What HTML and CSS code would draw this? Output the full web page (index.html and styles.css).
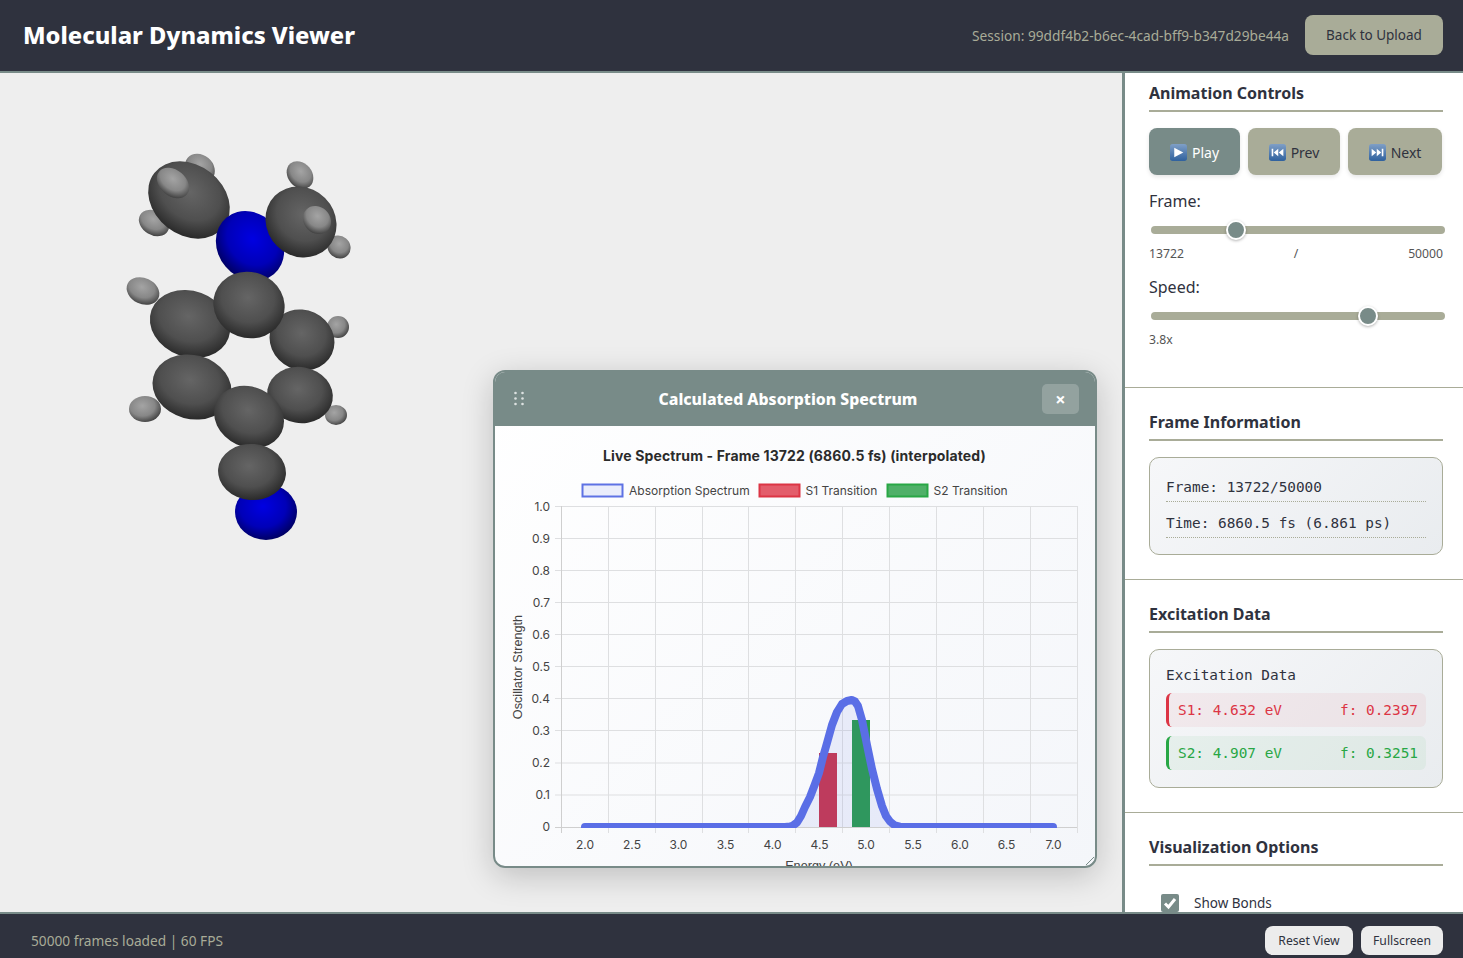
FILE: index.html
```html
<!DOCTYPE html>
<html>
  <head>
    <title>Molecular Dynamics Viewer</title>
    <link rel="stylesheet" href="styles.css">
  </head>
  <body>
    <header class="topbar">
      <h1>Molecular Dynamics Viewer</h1>
      <div class="session">
        <span class="session-id">Session: 99ddf4b2-b6ec-4cad-bff9-b347d29be44a</span>
        <button class="btn-upload">Back to Upload</button>
      </div>
    </header>

    <div class="main">
      <div class="viewer">
        <svg class="molecule" viewBox="0 73 1122 839">
          <defs>
            <radialGradient id="carbon" cx="0.45" cy="0.4" r="0.62">
              <stop offset="0" stop-color="#656565" />
              <stop offset="0.6" stop-color="#4f4f4f" />
              <stop offset="1" stop-color="#282828" />
            </radialGradient>
            <radialGradient id="hydrogen" cx="0.42" cy="0.38" r="0.65">
              <stop offset="0" stop-color="#a4a4a4" />
              <stop offset="0.6" stop-color="#878787" />
              <stop offset="1" stop-color="#404040" />
            </radialGradient>
            <radialGradient id="nitrogen" cx="0.45" cy="0.4" r="0.62">
              <stop offset="0" stop-color="#0000e2" />
              <stop offset="0.6" stop-color="#0000b8" />
              <stop offset="1" stop-color="#00005e" />
            </radialGradient>
            <linearGradient id="keyBlue" x1="0" y1="0" x2="0" y2="1">
              <stop offset="0" stop-color="#7f9fc6" />
              <stop offset="1" stop-color="#2f619e" />
            </linearGradient>
          </defs>
          <ellipse fill="url(#hydrogen)" cx="200" cy="168" rx="16" ry="13" transform="rotate(40 200 168)" />
          <ellipse fill="url(#hydrogen)" cx="154" cy="223" rx="16" ry="12" transform="rotate(30 154 223)" />
          <ellipse fill="url(#hydrogen)" cx="300" cy="175" rx="15" ry="12" transform="rotate(50 300 175)" />
          <ellipse fill="url(#hydrogen)" cx="339" cy="247" rx="12" ry="11" transform="rotate(40 339 247)" />
          <ellipse fill="url(#carbon)" cx="189" cy="200" rx="44" ry="35" transform="rotate(38 189 200)" />
          <ellipse fill="url(#hydrogen)" cx="173" cy="183" rx="18" ry="13" transform="rotate(40 173 183)" />
          <ellipse fill="url(#nitrogen)" cx="250" cy="246" rx="37" ry="32" transform="rotate(50 250 246)" />
          <ellipse fill="url(#carbon)" cx="301" cy="222" rx="37" ry="34" transform="rotate(45 301 222)" />
          <ellipse fill="url(#hydrogen)" cx="317" cy="220" rx="15" ry="13" transform="rotate(45 317 220)" />
          <ellipse fill="url(#hydrogen)" cx="143" cy="291" rx="17" ry="13" transform="rotate(25 143 291)" />
          <ellipse fill="url(#hydrogen)" cx="338" cy="327" rx="11" ry="11" />
          <ellipse fill="url(#carbon)" cx="302" cy="340" rx="33" ry="30" transform="rotate(25 302 340)" />
          <ellipse fill="url(#carbon)" cx="190" cy="324" rx="41" ry="33" transform="rotate(20 190 324)" />
          <ellipse fill="url(#carbon)" cx="249" cy="305" rx="36" ry="33" transform="rotate(20 249 305)" />
          <ellipse fill="url(#hydrogen)" cx="145" cy="409" rx="16" ry="13" />
          <ellipse fill="url(#hydrogen)" cx="336" cy="415" rx="11" ry="10" />
          <ellipse fill="url(#carbon)" cx="300" cy="395" rx="33" ry="28" transform="rotate(10 300 395)" />
          <ellipse fill="url(#carbon)" cx="192" cy="387" rx="40" ry="32" transform="rotate(15 192 387)" />
          <ellipse fill="url(#carbon)" cx="249" cy="417" rx="36" ry="30" transform="rotate(25 249 417)" />
          <ellipse fill="url(#nitrogen)" cx="266" cy="512" rx="31" ry="28" />
          <ellipse fill="url(#carbon)" cx="252" cy="472" rx="34" ry="28" transform="rotate(5 252 472)" />
        </svg>

        <div class="spectrum-modal">
          <div class="modal-head">
            <svg class="grip" width="12" height="16" viewBox="0 0 12 16">
              <circle cx="1.5" cy="2" r="1.3" />
              <circle cx="8.5" cy="2" r="1.3" />
              <circle cx="1.5" cy="7.5" r="1.3" />
              <circle cx="8.5" cy="7.5" r="1.3" />
              <circle cx="1.5" cy="13" r="1.3" />
              <circle cx="8.5" cy="13" r="1.3" />
            </svg>
            <h3>Calculated Absorption Spectrum</h3>
            <button class="modal-close">&times;</button>
          </div>
          <div class="modal-body">
            <svg class="chart" width="600" height="440" viewBox="495 426 600 440">
              <defs>
                <clipPath id="plotArea"><rect x="561" y="506" width="516" height="322" /></clipPath>
              </defs>
              <text class="chart-title" x="794.5" y="461" text-anchor="middle">Live Spectrum - Frame 13722 (6860.5 fs) (interpolated)</text>

              <rect x="582.5" y="484.5" width="40" height="12" fill="#eaedfb" stroke="#5e72e4" stroke-width="2" />
              <text class="tick" x="629" y="495">Absorption Spectrum</text>
              <rect x="759.5" y="484.5" width="40" height="12" fill="#e35d6b" stroke="#dc3545" stroke-width="2" />
              <text class="tick" x="805.5" y="495">S1 Transition</text>
              <rect x="887.5" y="484.5" width="40" height="12" fill="#4fb068" stroke="#28a745" stroke-width="2" />
              <text class="tick" x="933.5" y="495">S2 Transition</text>

              <path class="grid" d="M608.5 506V833M655.5 506V833M702.5 506V833M748.5 506V833M795.5 506V833M842.5 506V833M889.5 506V833M936.5 506V833M983.5 506V833M1030.5 506V833M1077.5 506V833" />
              <path class="grid" d="M555 506.5H1077M555 538.5H1077M555 570.5H1077M555 602.5H1077M555 634.5H1077M555 666.5H1077M555 698.5H1077M555 730.5H1077M555 763H1077M555 795H1077" />
              <path class="axis" d="M561.5 506V833M555 827.5H1077" />

              <rect x="819" y="753" width="18" height="74" fill="#c9354f" />
              <rect x="852" y="720" width="18" height="107" fill="#2a9b50" />
              <g clip-path="url(#plotArea)">
                <polygon class="curve-fill" points="785,827 790,826.5 793,825.5 797,822.5 801,816 805,807 810,797 815,784 819,773 823,757 827,743 832,725 837,712 842,704 847,701 851.7,700 855,701.5 858,706 862,720 867,745 872,769 877,789 882,806 886,816 890,821.5 895,825.5 900,826.7 905,827" />
                <polyline class="curve" points="585,827 785,827 790,826.5 793,825.5 797,822.5 801,816 805,807 810,797 815,784 819,773 823,757 827,743 832,725 837,712 842,704 847,701 851.7,700 855,701.5 858,706 862,720 867,745 872,769 877,789 882,806 886,816 890,821.5 895,825.5 900,826.7 905,827 1053,827" />
              </g>

              <text class="tick" x="550" y="511" text-anchor="end">1.0</text>
              <text class="tick" x="550" y="543" text-anchor="end">0.9</text>
              <text class="tick" x="550" y="575" text-anchor="end">0.8</text>
              <text class="tick" x="550" y="607" text-anchor="end">0.7</text>
              <text class="tick" x="550" y="639" text-anchor="end">0.6</text>
              <text class="tick" x="550" y="671" text-anchor="end">0.5</text>
              <text class="tick" x="550" y="703" text-anchor="end">0.4</text>
              <text class="tick" x="550" y="735" text-anchor="end">0.3</text>
              <text class="tick" x="550" y="767" text-anchor="end">0.2</text>
              <text class="tick" x="550" y="799" text-anchor="end">0.1</text>
              <text class="tick" x="550" y="831" text-anchor="end">0</text>

              <text class="tick" x="585" y="849" text-anchor="middle">2.0</text>
              <text class="tick" x="632" y="849" text-anchor="middle">2.5</text>
              <text class="tick" x="678.5" y="849" text-anchor="middle">3.0</text>
              <text class="tick" x="725.5" y="849" text-anchor="middle">3.5</text>
              <text class="tick" x="772.5" y="849" text-anchor="middle">4.0</text>
              <text class="tick" x="819.5" y="849" text-anchor="middle">4.5</text>
              <text class="tick" x="866" y="849" text-anchor="middle">5.0</text>
              <text class="tick" x="913" y="849" text-anchor="middle">5.5</text>
              <text class="tick" x="960" y="849" text-anchor="middle">6.0</text>
              <text class="tick" x="1006.5" y="849" text-anchor="middle">6.5</text>
              <text class="tick" x="1053.5" y="849" text-anchor="middle">7.0</text>

              <text class="axis-title" x="819" y="870" text-anchor="middle">Energy (eV)</text>
              <text class="axis-title" transform="translate(522 667) rotate(-90)" text-anchor="middle">Oscillator Strength</text>
            </svg>
          </div>
          <svg class="resize-grip" width="10" height="10" viewBox="0 0 10 10">
            <path d="M1 9L9 1M5 9L9 5" />
          </svg>
        </div>
      </div>

      <aside class="sidebar">
        <section class="panel panel-first">
          <h3>Animation Controls</h3>
          <div class="controls">
            <button class="ctrl ctrl-play">
              <svg class="key" viewBox="0 0 16 16"><rect width="16" height="16" rx="2.5" fill="url(#keyBlue)" /><path d="M4 3.5L12.5 8L4 12.5Z" /></svg>
              Play
            </button>
            <button class="ctrl ctrl-prev">
              <svg class="key" viewBox="0 0 16 16"><rect width="16" height="16" rx="2.5" fill="url(#keyBlue)" /><path d="M2.5 4.5H4V11.5H2.5ZM8.7 4.5V11.5L4.5 8ZM13.5 4.5V11.5L9.2 8Z" /></svg>
              Prev
            </button>
            <button class="ctrl ctrl-next">
              <svg class="key" viewBox="0 0 16 16"><rect width="16" height="16" rx="2.5" fill="url(#keyBlue)" /><path d="M2.5 4.5L6.8 8L2.5 11.5ZM7.3 4.5L11.5 8L7.3 11.5ZM12 4.5H13.5V11.5H12Z" /></svg>
              Next
            </button>
          </div>
          <label class="field-label">Frame:</label>
          <input class="slider" type="range" min="0" max="50000" value="13722">
          <div class="slider-values"><span>13722</span><span>/</span><span>50000</span></div>
          <label class="field-label">Speed:</label>
          <input class="slider" type="range" min="0.1" max="5" step="0.1" value="3.8">
          <div class="slider-values"><span>3.8x</span></div>
        </section>

        <section class="panel">
          <h3>Frame Information</h3>
          <div class="info-box">
            <div class="info-row">Frame: 13722/50000</div>
            <div class="info-row">Time: 6860.5 fs (6.861 ps)</div>
          </div>
        </section>

        <section class="panel">
          <h3>Excitation Data</h3>
          <div class="info-box exc-box">
            <div class="exc-title">Excitation Data</div>
            <div class="exc-row exc-s1"><span>S1: 4.632 eV</span><span>f: 0.2397</span></div>
            <div class="exc-row exc-s2"><span>S2: 4.907 eV</span><span>f: 0.3251</span></div>
          </div>
        </section>

        <section class="panel">
          <h3>Visualization Options</h3>
          <label class="option">
            <span class="check"><svg width="18" height="18" viewBox="0 0 18 18"><path d="M4 9.5L7.5 13L14 5" /></svg></span>
            Show Bonds
          </label>
        </section>
      </aside>
    </div>

    <footer class="bottombar">
      <span class="status">50000 frames loaded | 60 FPS</span>
      <div class="footer-btns">
        <button class="btn-foot btn-reset">Reset View</button>
        <button class="btn-foot btn-full">Fullscreen</button>
      </div>
    </footer>
  </body>
</html>
```

FILE: styles.css
```css
body {
  margin: 0;
  height: 100vh;
  display: flex;
  flex-direction: column;
  overflow: hidden;
  font-family: "Noto Sans", sans-serif;
  color: #2f323e;
  background-color: #eeeeee;
}

button {
  font-family: "Noto Sans", sans-serif;
  border: none;
}

.topbar {
  height: 70px;
  flex-shrink: 0;
  display: flex;
  align-items: center;
  justify-content: space-between;
  padding: 0 20px 1px 23px;
  background-color: #2f323e;
  border-bottom: 2px solid #788b88;
}

.topbar h1 {
  margin: 0;
  font-size: 23.7px;
  font-weight: 800;
  color: white;
}

.session {
  display: flex;
  align-items: center;
  gap: 16px;
}

.session-id {
  font-size: 13.7px;
  color: #a9ac98;
}

.btn-upload {
  width: 138px;
  height: 40px;
  font-size: 13.5px;
  color: #2f323e;
  background-color: #a9ac98;
  border-radius: 8px;
}

.main {
  flex: 1;
  min-height: 0;
  display: flex;
}

.viewer {
  flex: 1;
  position: relative;
  overflow: hidden;
}

.molecule {
  display: block;
  width: 100%;
  height: 100%;
}

.spectrum-modal {
  position: absolute;
  left: 493px;
  top: 297px;
  width: 600px;
  height: 494px;
  border: 2px solid #788b88;
  border-radius: 12px;
  overflow: hidden;
  background: linear-gradient(135deg, #ffffff, #f4f6fa);
  box-shadow: 0 8px 32px rgba(0, 0, 0, 0.2);
}

.modal-head {
  height: 54px;
  display: flex;
  align-items: center;
  justify-content: center;
  padding-right: 14px;
  position: relative;
  background-color: #788b88;
}

.modal-head h3 {
  margin: 0;
  font-size: 15.8px;
  font-weight: 800;
  color: white;
}

.grip {
  position: absolute;
  left: 19px;
  top: 19px;
  fill: rgba(255, 255, 255, 0.75);
}

.modal-close {
  position: absolute;
  left: 547px;
  top: 12px;
  width: 37px;
  height: 30px;
  padding: 0;
  font-size: 18px;
  font-weight: 700;
  color: white;
  background-color: rgba(255, 255, 255, 0.2);
  border-radius: 5px;
}

.chart {
  display: block;
}

.chart-title {
  font-family: Inter, sans-serif;
  font-size: 14px;
  font-weight: 700;
  letter-spacing: 0.13px;
  fill: #2b2b2b;
}

.tick {
  font-family: Inter, sans-serif;
  font-size: 12px;
  fill: #444444;
}

.axis-title {
  font-family: "Liberation Sans", sans-serif;
  font-size: 12.7px;
  fill: #444444;
}

.grid {
  fill: none;
  stroke: #dedfe1;
  stroke-width: 1;
}

.axis {
  fill: none;
  stroke: #cfcfcf;
  stroke-width: 1;
}

.curve {
  fill: none;
  stroke: #5a6ee6;
  stroke-width: 8;
  stroke-linejoin: round;
  stroke-linecap: round;
}

.curve-fill {
  fill: rgba(94, 114, 228, 0.1);
}

.resize-grip {
  position: absolute;
  right: 0;
  bottom: 0;
  fill: none;
  stroke: #788b88;
  stroke-width: 1;
}

.sidebar {
  width: 338px;
  flex-shrink: 0;
  overflow: hidden;
  background-color: white;
  border-left: 3px solid #788b88;
}

.panel {
  padding: 23px 20px 24px 24px;
  border-bottom: 1px solid #a9ac98;
}

.panel-first {
  padding-top: 9px;
}

.panel h3 {
  margin: 0 0 16px 0;
  padding-bottom: 6px;
  font-size: 16px;
  font-weight: 700;
  line-height: 22px;
  border-bottom: 2px solid #a9ac98;
}

.controls {
  display: flex;
  gap: 8px;
  margin-bottom: 16px;
}

.ctrl {
  height: 47px;
  display: flex;
  align-items: center;
  justify-content: center;
  gap: 5px;
  padding: 2px 0 0 0;
  font-size: 14px;
  color: #2f323e;
  background-color: #a9ac98;
  border-radius: 8px;
  box-shadow: 0 2px 4px rgba(0, 0, 0, 0.1);
}

.ctrl-play {
  width: 91px;
  color: white;
  background-color: #788b88;
}

.ctrl-prev {
  width: 92px;
}

.ctrl-next {
  width: 94px;
}

.key {
  width: 17px;
  height: 17px;
  fill: white;
}

.field-label {
  display: block;
  font-size: 16px;
  line-height: 20px;
}

.slider {
  appearance: none;
  display: block;
  width: 294px;
  height: 8px;
  margin: 15px 0 0 2px;
  background-color: #a9ac98;
  border-radius: 4px;
}

.slider::-webkit-slider-thumb {
  appearance: none;
  width: 20px;
  height: 20px;
  background-color: #788b88;
  border: 2px solid white;
  border-radius: 50%;
  box-shadow: 0 1px 3px rgba(0, 0, 0, 0.3);
}

.slider-values {
  display: flex;
  justify-content: space-between;
  margin: 11px 0 15px 0;
  font-size: 12.2px;
  line-height: 17px;
  color: #555555;
}

.info-box {
  padding: 16px;
  border: 1px solid #a9ac98;
  border-radius: 10px;
  background: linear-gradient(135deg, #f6f7f9, #e9ecef);
  font-family: "DejaVu Sans Mono", monospace;
  font-size: 14.4px;
}

.exc-box {
  padding-bottom: 17px;
}

.info-row {
  height: 27px;
  line-height: 26px;
  margin-bottom: 8px;
  border-bottom: 1px dotted #a9ac98;
}

.info-row:last-child {
  margin-bottom: 0;
}

.exc-title {
  line-height: 18px;
  margin-bottom: 8px;
}

.exc-row {
  height: 34px;
  display: flex;
  align-items: center;
  justify-content: space-between;
  padding: 0 8px 0 9px;
  margin-top: 9px;
  border-left: 3px solid;
  border-radius: 6px;
}

.exc-s1 {
  color: #dc3545;
  border-color: #dc3545;
  background-color: rgba(220, 53, 69, 0.06);
}

.exc-s2 {
  color: #28a745;
  border-color: #28a745;
  background-color: rgba(40, 167, 69, 0.06);
}

.option {
  display: flex;
  align-items: center;
  gap: 15px;
  margin: 28px 0 0 12px;
  font-size: 13.5px;
}

.check {
  width: 18px;
  height: 18px;
  background-color: #788b88;
  border-radius: 2px;
}

.check svg {
  display: block;
  fill: none;
  stroke: white;
  stroke-width: 3;
}

.bottombar {
  height: 31px;
  flex-shrink: 0;
  display: flex;
  align-items: center;
  justify-content: space-between;
  padding: 11px 20px 2px 31px;
  background-color: #2f323e;
  border-top: 2px solid #788b88;
}

.status {
  font-size: 13.7px;
  color: #a9ac98;
}

.footer-btns {
  display: flex;
  gap: 8px;
}

.btn-foot {
  height: 29px;
  padding: 0;
  font-size: 12.2px;
  color: #2f323e;
  background-color: #ececec;
  border-radius: 8px;
}

.btn-reset {
  width: 88px;
}

.btn-full {
  width: 82px;
}
```
